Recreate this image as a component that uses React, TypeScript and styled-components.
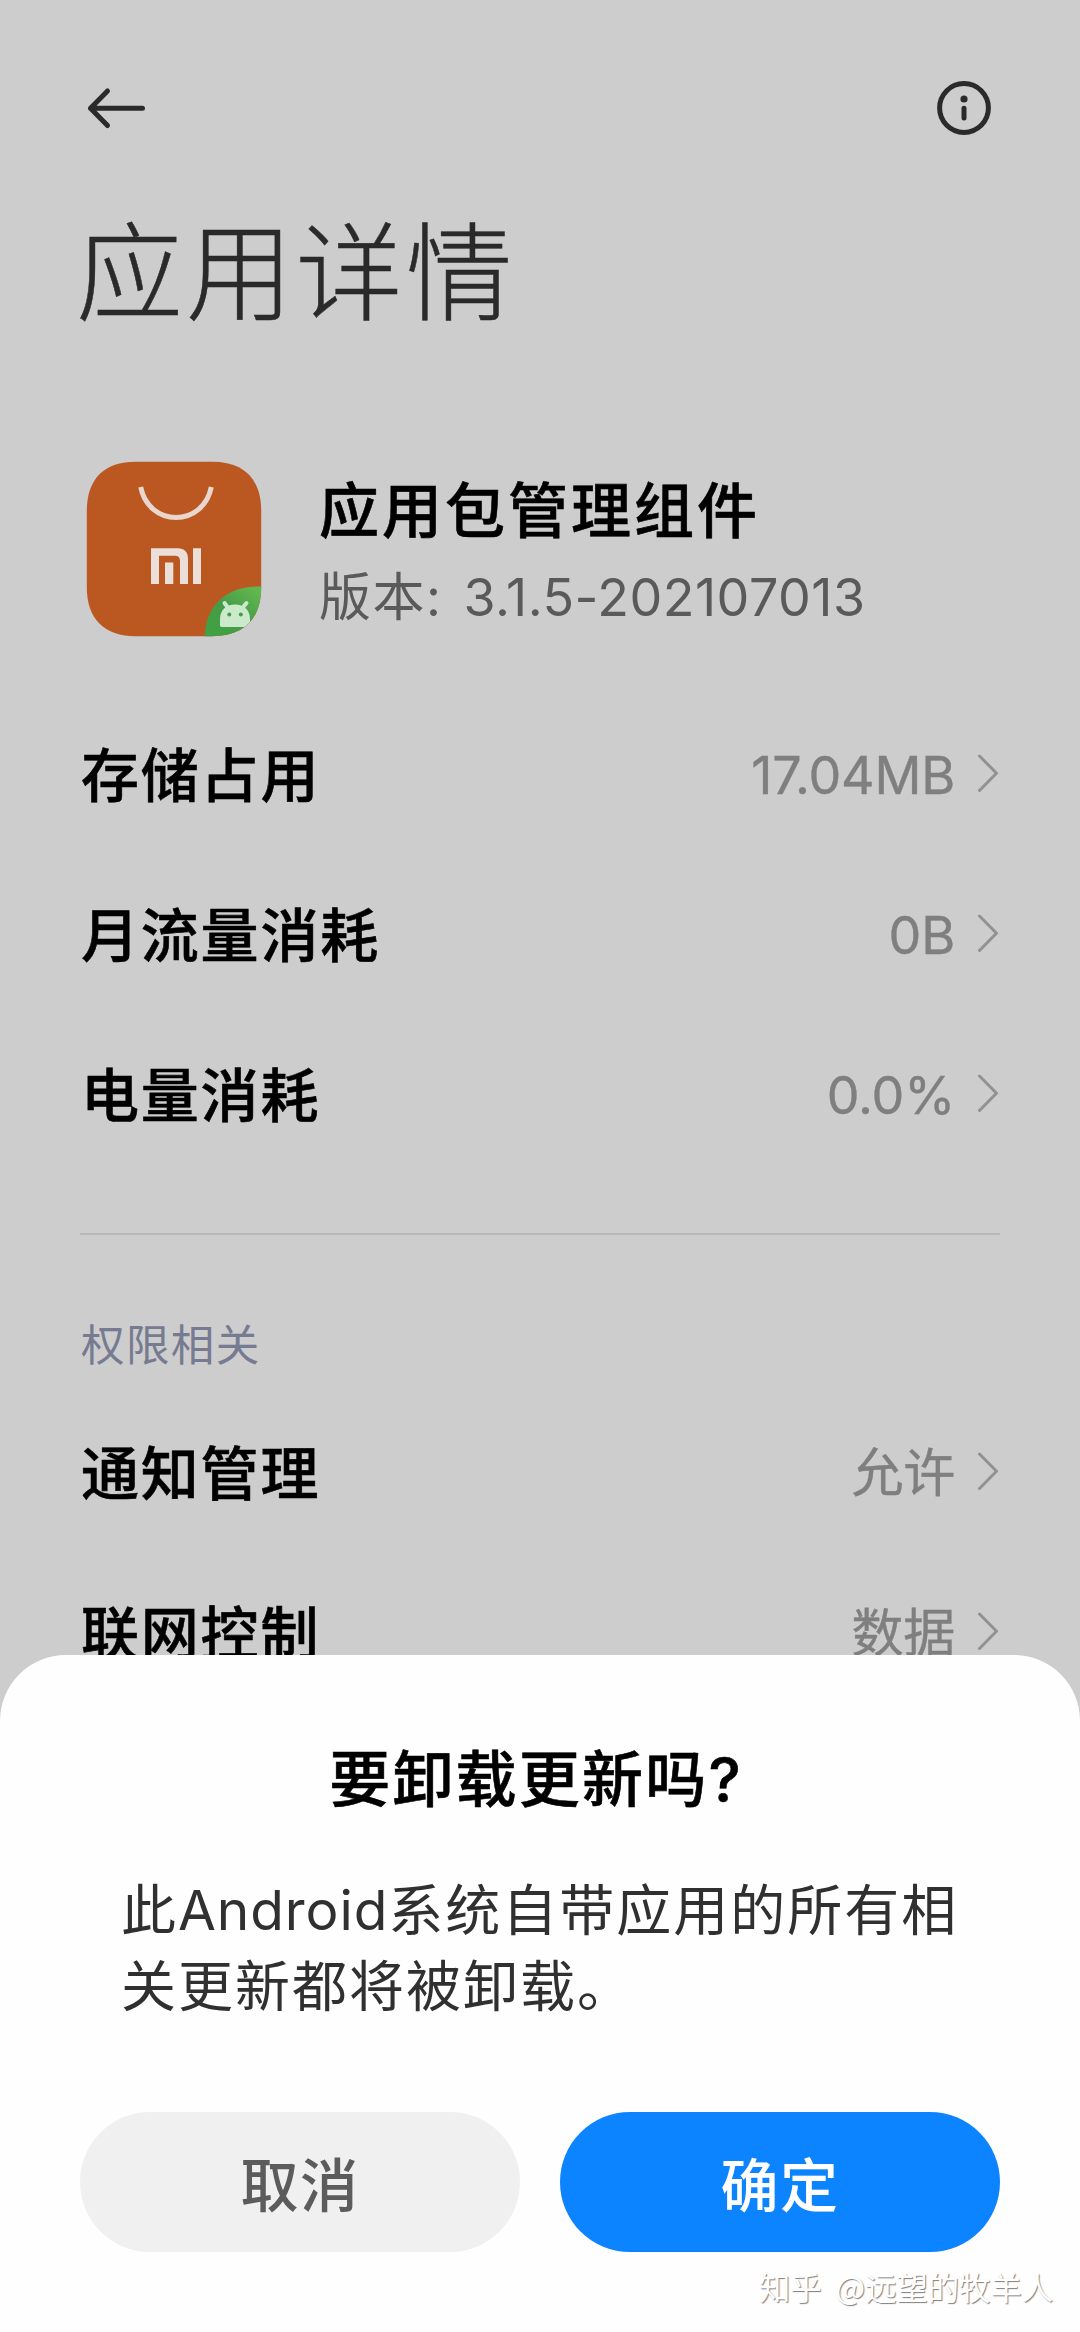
import React from "react";
import styled, { createGlobalStyle } from "styled-components";

const GlobalStyle = createGlobalStyle`
  * { box-sizing: border-box; }
  body { margin: 0; background: #cdcdcd; }
`;

const Screen = styled.div`
  position: relative;
  width: 1080px;
  height: 2332px;
  overflow: hidden;
  background: #cdcdcd;
  color: #000;
  font-family: "Lato", "Noto Sans CJK SC", sans-serif;
`;

const Page = styled.main`
  display: flex;
  flex-direction: column;
  padding: 0 80px;
`;

const TopBar = styled.header`
  display: flex;
  align-items: center;
  justify-content: space-between;
  height: 216px;
  padding: 0 8px 0 6px;
`;

const IconButton = styled.button`
  display: flex;
  padding: 0;
  border: 0;
  background: none;
  color: #2a2a2a;
`;

const PageTitle = styled.h1`
  margin: 0 0 0 -4px;
  height: 110px;
  line-height: 110px;
  font-size: 107px;
  font-weight: 300;
  letter-spacing: 2.9px;
  -webkit-text-stroke: 0.5px currentColor;
  color: #2a2a2a;
`;

const AppHeader = styled.section`
  display: flex;
  align-items: center;
  height: 175px;
  margin: 135px 0 59px;
  padding-left: 6px;
  gap: 57px;
`;

const AppText = styled.div`
  display: flex;
  flex-direction: column;
  padding-top: 4px;
`;

const AppName = styled.h2`
  margin: 0;
  height: 90px;
  line-height: 90px;
  font-size: 60px;
  font-weight: 500;
  letter-spacing: 3px;
  -webkit-text-stroke: 0.6px currentColor;
`;

const AppVersion = styled.p`
  margin: 0;
  height: 82px;
  line-height: 86px;
  font-family: "Inter", "Noto Sans CJK SC", sans-serif;
  font-size: 52px;
  letter-spacing: 1.5px;
  white-space: pre;
  color: #5a5a5a;
`;

const VersionNumber = styled.span`
  margin-left: 5px;
  letter-spacing: 0.5px;
`;

const Row = styled.div`
  display: flex;
  align-items: center;
  height: 160px;
`;

const RowLabel = styled.span`
  flex: 1;
  padding-left: 1px;
  font-size: 58px;
  line-height: 80px;
  font-weight: 500;
  letter-spacing: 1.8px;
  -webkit-text-stroke: 0.6px currentColor;
`;

const RowValue = styled.span`
  padding-top: 1px;
  font-family: "Inter", "Noto Sans CJK SC", sans-serif;
  font-size: 52px;
  line-height: 80px;
  letter-spacing: -0.2px;
  -webkit-text-stroke: 0.4px currentColor;
  color: #7f7f7f;
  margin-right: 21px;
`;

const Divider = styled.hr`
  width: 100%;
  height: 2px;
  margin: 58px 0;
  border: 0;
  background: #b8b8b8;
`;

const SectionTitle = styled.h3`
  margin: 0;
  padding-left: 1px;
  height: 100px;
  line-height: 102px;
  font-size: 43.5px;
  font-weight: 400;
  letter-spacing: 1.4px;
  color: #767b92;
`;

const Dialog = styled.section`
  position: absolute;
  left: 0;
  right: 0;
  bottom: 0;
  display: flex;
  flex-direction: column;
  height: 677px;
  padding: 74px 80px 80px;
  border-radius: 66px 66px 0 0;
  background: #fefefe;
`;

const DialogTitle = styled.h2`
  margin: 0;
  padding-right: 8px;
  height: 100px;
  line-height: 102px;
  text-align: center;
  font-family: "Inter", "Noto Sans CJK SC", sans-serif;
  font-size: 61px;
  font-weight: 500;
  letter-spacing: 2.2px;
  -webkit-text-stroke: 0.6px currentColor;
`;

const DialogText = styled.p`
  margin: 43px 0 0;
  padding: 0 41px;
  height: 240px;
  line-height: 76px;
  font-family: "Inter", "Noto Sans CJK SC", sans-serif;
  font-size: 55px;
  letter-spacing: 2px;
  white-space: nowrap;
  color: #303030;
`;

const Latin = styled.span`
  letter-spacing: 0.9px;
`;

const DialogActions = styled.div`
  display: flex;
  gap: 40px;
`;

const ActionButton = styled.button<{ $primary?: boolean }>`
  flex: 1;
  height: 140px;
  padding: 0;
  border: 0;
  border-radius: 70px;
  font-family: inherit;
  font-size: 58px;
  font-weight: 500;
  letter-spacing: 1.5px;
  background: ${(p) => (p.$primary ? "#0d84ff" : "#f0f0f0")};
  color: ${(p) => (p.$primary ? "#fff" : "#5c5c5c")};
`;

const Watermark = styled.div`
  position: absolute;
  right: 27px;
  bottom: 25px;
  line-height: 40px;
  font-family: "Noto Sans CJK SC", sans-serif;
  font-size: 31.3px;
  word-spacing: 7px;
  color: #fff;
  text-shadow: 1px 1px 1px rgba(0, 0, 0, 0.5);
  white-space: pre;
`;

const BackIcon = () => (
  <svg width="60" height="44" viewBox="0 0 60 44" fill="none" stroke="currentColor" strokeWidth="5" strokeLinecap="round" strokeLinejoin="round">
    <path d="M4.5 22.3H56.5M21.5 5 4.5 22.3 21.5 39.5" />
  </svg>
);

const InfoIcon = () => (
  <svg width="56" height="56" viewBox="0 0 56 56" fill="none">
    <circle cx="28" cy="28" r="24.4" stroke="currentColor" strokeWidth="5" />
    <circle cx="28" cy="19" r="3.6" fill="currentColor" />
    <path d="M28 28.3V38" stroke="currentColor" strokeWidth="5" strokeLinecap="round" />
  </svg>
);

const AppIcon = () => (
  <svg width="176" height="176" viewBox="0 0 176 176" fill="none">
    <defs>
      <clipPath id="tile">
        <path d="M50 .8H126C158 .8 175.200 18 175.200 50V126C175.200 158 158 175.200 126 175.200H50C18 175.200 .8 158 .8 126V50C.8 18 18 .8 50 .8Z" />
      </clipPath>
      <linearGradient id="leaf" x1="165" y1="125" x2="128" y2="176" gradientUnits="userSpaceOnUse">
        <stop stopColor="#61b84e" />
        <stop offset=".5" stopColor="#469c48" />
        <stop offset="1" stopColor="#3fa142" />
      </linearGradient>
    </defs>
    <g clipPath="url(#tile)">
      <path d="M0 0H176V176H0Z" fill="#bb5822" />
      <path d="M54.700 26C58.500 45 73 56.500 90 56.500S121.500 45 125.300 26" stroke="#e9d6ce" strokeWidth="5" />
      <path d="M65 87.300H91.500C98.500 87.300 102 91 102 98V123H94V100C94 96.500 92.300 94.700 89 94.700H73V123H65Z" fill="#ecdfd9" />
      <path d="M79 101.500H87.300V123H79ZM107 87.300H115V123H107Z" fill="#ecdfd9" />
      <path d="M119 176C118.500 147 139 123.500 176 125.500V176Z" fill="url(#leaf)" />
      <path d="M134 164V158C134 149 140 143.500 149 143.500S164 149 164 158V160C164 162.500 162 166 159.500 166H136C134.500 166 134 165.500 134 164Z" fill="#cbe9cb" />
      <path d="M138.500 142 142.500 147.500M160.500 142 156 147.500" stroke="#cbe9cb" strokeWidth="4" strokeLinecap="round" />
      <circle cx="143.300" cy="153.500" r="2" fill="#469c48" />
      <circle cx="154.800" cy="153.500" r="2" fill="#469c48" />
    </g>
  </svg>
);

const Chevron = () => (
  <svg width="24" height="42" viewBox="0 0 24 42" fill="none" stroke="#929292" strokeWidth="3" strokeLinecap="round" strokeLinejoin="round">
    <path d="M3.500 2 20.500 19.200 3.500 36.500" />
  </svg>
);

const Item = ({ label, value }: { label: string; value: string }) => (
  <Row>
    <RowLabel>{label}</RowLabel>
    <RowValue>{value}</RowValue>
    <Chevron />
  </Row>
);

const usage = [
  { label: "存储占用", value: "17.04MB" },
  { label: "月流量消耗", value: "0B" },
  { label: "电量消耗", value: "0.0%" },
];

const permissions = [
  { label: "通知管理", value: "允许" },
  { label: "联网控制", value: "数据" },
];

export default function App() {
  return (
    <Screen>
      <GlobalStyle />
      <Page>
        <TopBar>
          <IconButton aria-label="返回"><BackIcon /></IconButton>
          <IconButton aria-label="信息"><InfoIcon /></IconButton>
        </TopBar>
        <PageTitle>应用详情</PageTitle>
        <AppHeader>
          <AppIcon />
          <AppText>
            <AppName>应用包管理组件</AppName>
            <AppVersion>版本: <VersionNumber>3.1.5-202107013</VersionNumber></AppVersion>
          </AppText>
        </AppHeader>
        {usage.map((i) => <Item key={i.label} {...i} />)}
        <Divider />
        <SectionTitle>权限相关</SectionTitle>
        {permissions.map((i) => <Item key={i.label} {...i} />)}
      </Page>
      <Dialog role="dialog">
        <DialogTitle>要卸载更新吗?</DialogTitle>
        <DialogText>此<Latin>Android</Latin>系统自带应用的所有相<br />关更新都将被卸载。</DialogText>
        <DialogActions>
          <ActionButton>取消</ActionButton>
          <ActionButton $primary>确定</ActionButton>
        </DialogActions>
      </Dialog>
      <Watermark>知乎 @远望的牧羊人</Watermark>
    </Screen>
  );
}
